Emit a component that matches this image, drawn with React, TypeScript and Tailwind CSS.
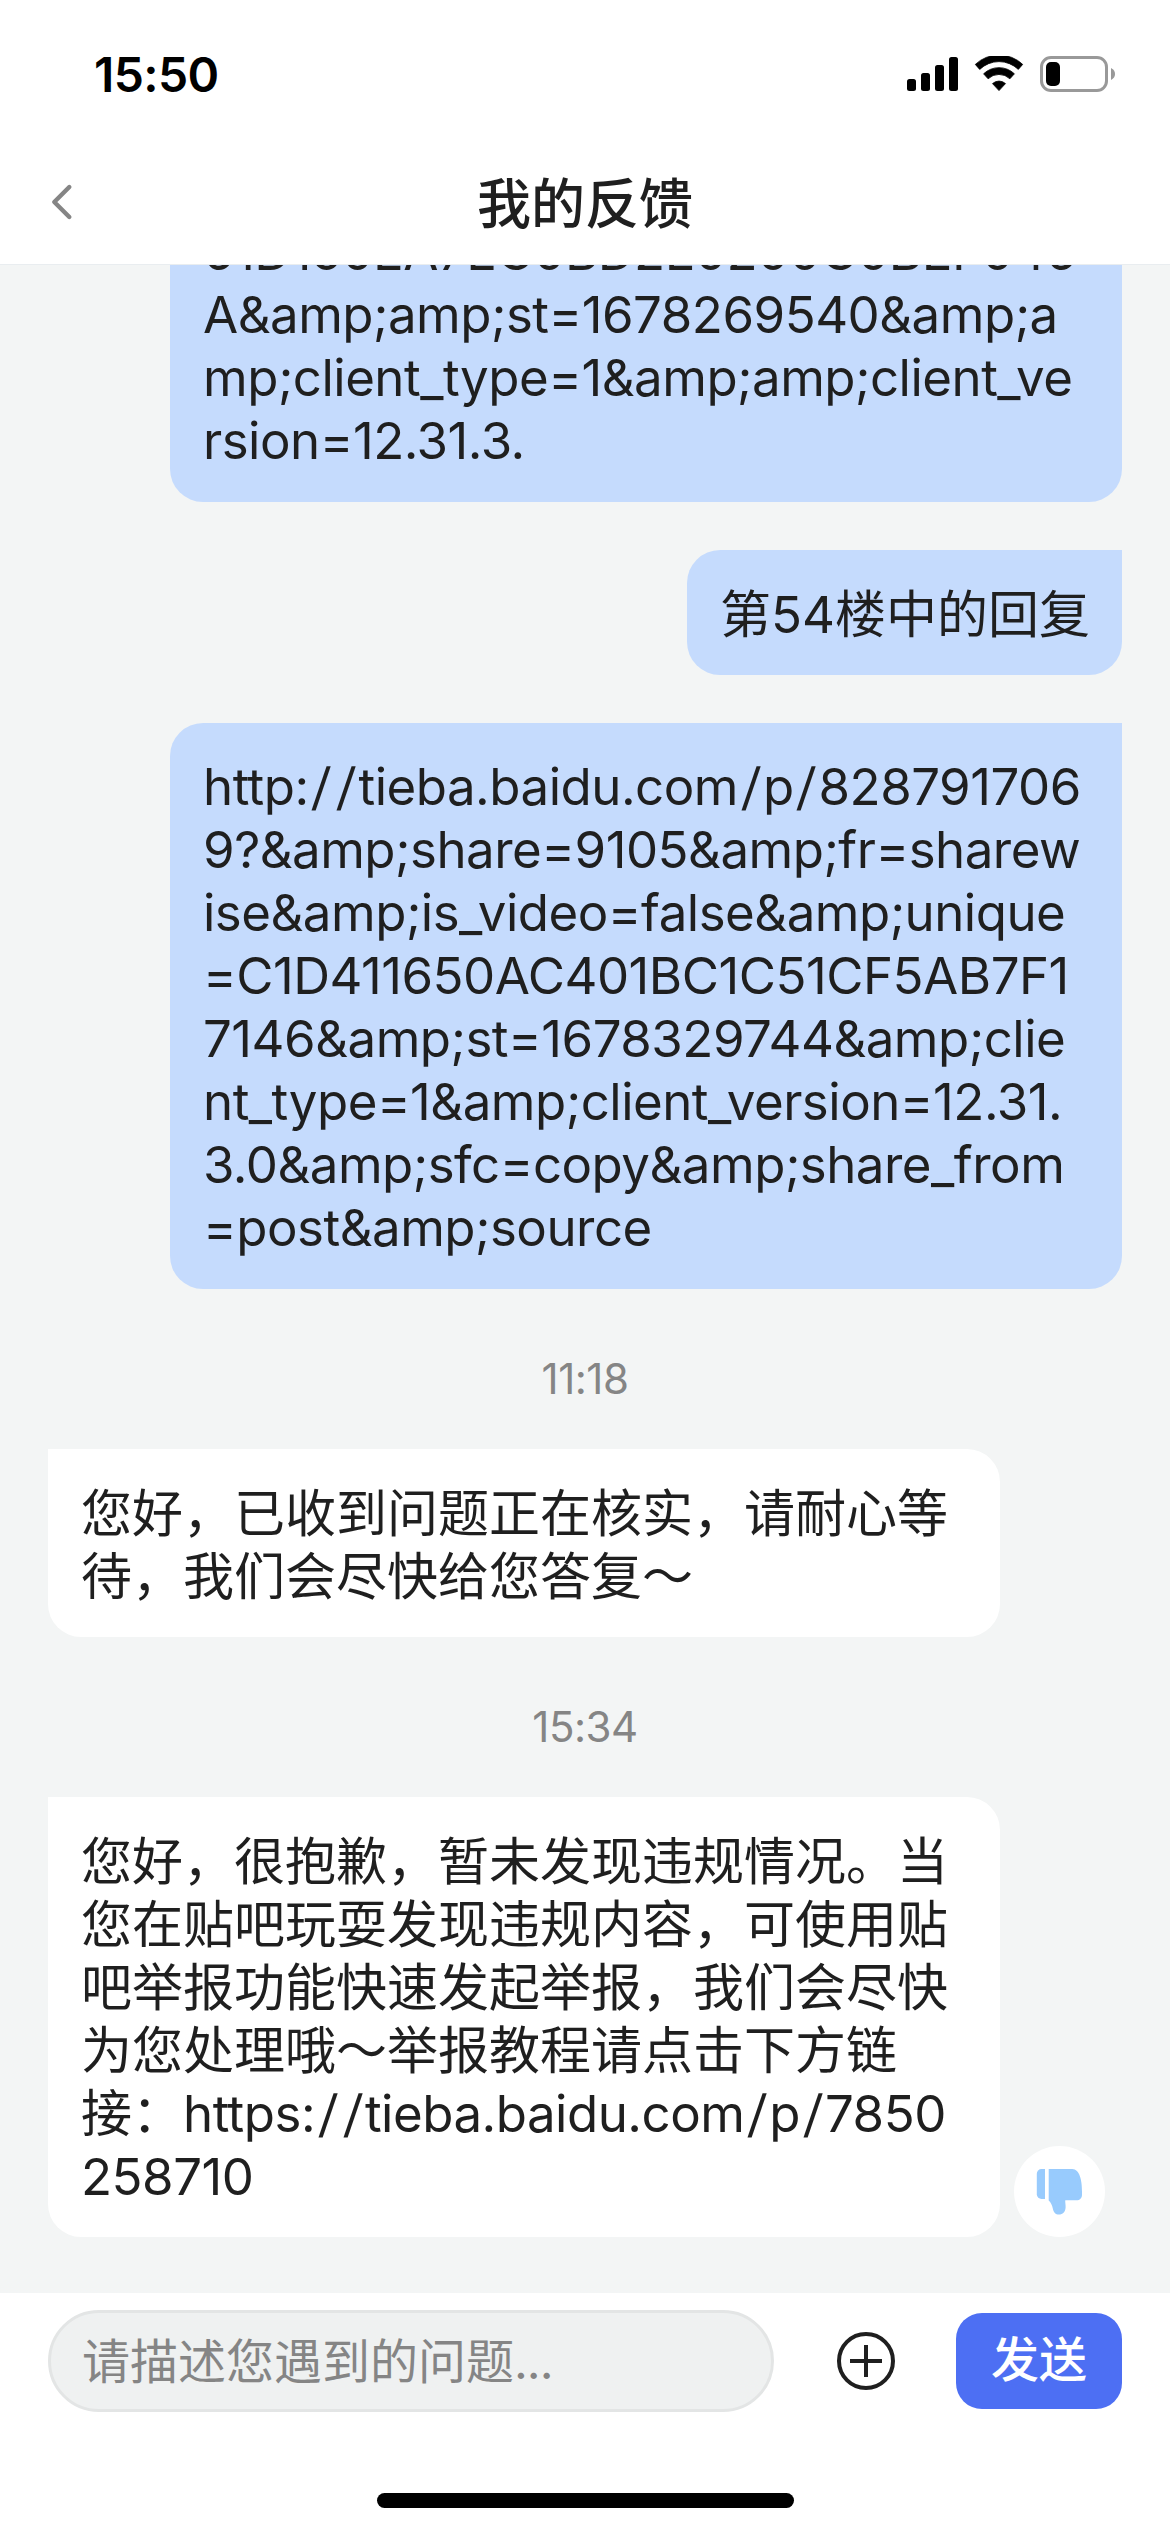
import type { ReactNode } from "react";

/** Latin run inside a message; slashes lean further and take more room than the font's own. */
function Latin({ children }: { children: string }) {
  return (
    <span className="tracking-[-0.5px]">
      {children.split(/(\/)/).map((part, i) =>
        part === "/" ? (
          <span key={i} className="mx-[3.500px] inline-block origin-center -skew-x-4">
            /
          </span>
        ) : (
          part
        ),
      )}
    </span>
  );
}

function Lines({ lines }: { lines: string[] }) {
  return (
    <>
      {lines.map((line, i) => (
        <p key={i}>
          <Latin>{line}</Latin>
        </p>
      ))}
    </>
  );
}

function Sent({ children, className = "" }: { children: ReactNode; className?: string }) {
  return (
    <div
      className={`self-end rounded-[33px] rounded-tr-none bg-[#c5dbfd] whitespace-nowrap ${className}`}
    >
      {children}
    </div>
  );
}

function Received({ children }: { children: ReactNode }) {
  return (
    <div className="w-[952px] rounded-[33px] rounded-tl-none bg-white pt-[33px] pr-8 pb-[29px] pl-[33px] whitespace-nowrap">
      {children}
    </div>
  );
}

function Time({ children, className = "" }: { children: string; className?: string }) {
  return (
    <p className={`text-center text-[42px] leading-[60px] tracking-[-0.5px] text-[#858585] ${className}`}>{children}</p>
  );
}

const previousLink = [
  "61D150EA7EC0BD2E0200C0BEF046",
  "A&amp;amp;st=1678269540&amp;a",
  "mp;client_type=1&amp;amp;client_ve",
  "rsion=12.31.3.",
];

const postLink = [
  "http://tieba.baidu.com/p/828791706",
  "9?&amp;share=9105&amp;fr=sharew",
  "ise&amp;is_video=false&amp;unique",
  "=C1D411650AC401BC1C51CF5AB7F1",
  "7146&amp;st=1678329744&amp;clie",
  "nt_type=1&amp;client_version=12.31.",
  "3.0&amp;sfc=copy&amp;share_from",
  "=post&amp;source",
];

function StatusIcons() {
  return (
    <svg width="210" height="38" viewBox="0 0 210 38" className="mr-[54px]">
      <rect x="1" y="23" width="9" height="12" rx="2.5" />
      <rect x="15" y="17" width="9" height="18" rx="2.5" />
      <rect x="29" y="9" width="9" height="26" rx="2.5" />
      <rect x="43" y="1" width="9" height="34" rx="2.5" />
      <g strokeLinejoin="round" stroke="#000" strokeWidth="0.8">
        <path d="M69.3 8.4a34.5 34.5 0 0 1 47.4 0l-4.4 5a27.8 27.8 0 0 0-38.6 0z" />
        <path d="M77.6 17.8a22.3 22.3 0 0 1 30.8 0l-4.5 5a15.8 15.8 0 0 0-21.8 0z" />
        <path d="M86.5 27.6a9.6 9.6 0 0 1 13 0L93 34.6z" />
      </g>
      <rect x="135.5" y="1.5" width="65" height="33" rx="9.5" fill="none" stroke="#999" strokeWidth="3" />
      <rect x="140" y="6" width="14" height="24" rx="5" />
      <path d="M205 12v12c5.4-2.6 5.4-9.4 0-12z" fill="#999" />
    </svg>
  );
}

export default function App() {
  return (
    <div
      lang="zh-CN"
      className="flex h-[2532px] w-[1170px] flex-col overflow-hidden bg-[#f3f5f5] font-['Inter','Noto_Sans_CJK_SC',sans-serif] text-[51px] leading-[63px] text-[#1f1f1f]"
    >
      <header className="h-[265px] shrink-0 border-b border-[#e9edf0] bg-white">
        <div className="flex h-[150px] items-center justify-between pl-[94px] text-black">
          <span className="pb-[2px] text-[48px] font-semibold tracking-[-0.6px]">15:50</span>
          <StatusIcons />
        </div>
        <div className="flex h-[108px] items-center">
          <svg width="118" height="60" viewBox="0 0 118 60" fill="none" stroke="#858585" strokeWidth="4.4" strokeLinecap="round" strokeLinejoin="round">
            <path d="M69.3 13L54.3 28l15 15" />
          </svg>
          <h1 className="flex-1 pr-[118px] text-center text-[54px] font-medium">我的反馈</h1>
        </div>
      </header>

      <main className="flex min-h-0 flex-1 flex-col overflow-hidden px-12">
        <Sent className="-mt-[77px] w-[952px] px-[33px] pt-8 pb-[30px]">
          <Lines lines={previousLink} />
        </Sent>
        <Sent className="mt-12 w-[435px] px-[33px] pt-[33px] pb-[29px]">第54楼中的回复</Sent>
        <Sent className="mt-12 w-[952px] px-[33px] pt-8 pb-[30px]">
          <Lines lines={postLink} />
        </Sent>

        <Time className="mt-[60px] mb-10">11:18</Time>
        <Received>
          <p>您好，已收到问题正在核实，请耐心等</p>
          <p>待，我们会尽快给您答复～</p>
        </Received>

        <Time className="mt-[60px] mb-10">15:34</Time>
        <div className="flex items-end gap-[14px]">
          <Received>
            <p>您好，很抱歉，暂未发现违规情况。当</p>
            <p>您在贴吧玩耍发现违规内容，可使用贴</p>
            <p>吧举报功能快速发起举报，我们会尽快</p>
            <p>为您处理哦～举报教程请点击下方链</p>
            <p>
              接：<Latin>https://tieba.baidu.com/p/7850</Latin>
            </p>
            <p>
              <Latin>258710</Latin>
            </p>
          </Received>
          <button className="flex size-[91px] shrink-0 items-center justify-center rounded-full bg-white">
            <svg width="91" height="91" viewBox="0 0 91 91" fill="#98cbfd">
              <path d="M31 23h-3.5a4.7 4.7 0 0 0-4.7 4.7v20.6a4.7 4.7 0 0 0 4.7 4.7H31z" />
              <path d="M34.7 23h23.5c7.5 0 9.8 11.5 9.8 22.5v3.2c0 3.3-2.2 5.6-5.5 5.6H51.3c-.3 2 .5 4.5.3 7.2-.2 4.4-3 7.1-6.6 7.1-3.5 0-5.5-2.6-6.2-6.2-.7-3.5-2-6-4.1-8z" />
            </svg>
          </button>
        </div>
      </main>

      <footer className="flex h-[239px] shrink-0 flex-col items-center bg-white pt-[17px]">
        <div className="flex w-full items-center px-12">
          <div className="flex h-[102px] w-[726px] items-center rounded-full border-[3px] border-[#e3e5e5] bg-[#eff1f1] pl-[31px] text-[48px] text-[#858585]">
            <span>请描述您遇到的问题</span>
            <span className="tracking-[-1px]">...</span>
          </div>
          <svg width="60" height="60" viewBox="0 0 60 60" fill="none" stroke="#1f1f1f" strokeWidth="4" className="ml-[62px]">
            <circle cx="30" cy="30" r="27" />
            <path d="M30 14v32M14 30h32" />
          </svg>
          <button className="ml-[60px] flex h-24 w-[166px] items-center justify-center rounded-[26px] bg-[#4d6ff3] pb-1 text-[48px] font-medium text-white">
            发送
          </button>
        </div>
        <div className="mt-[81px] h-[15px] w-[417px] rounded-full bg-black" />
      </footer>
    </div>
  );
}
